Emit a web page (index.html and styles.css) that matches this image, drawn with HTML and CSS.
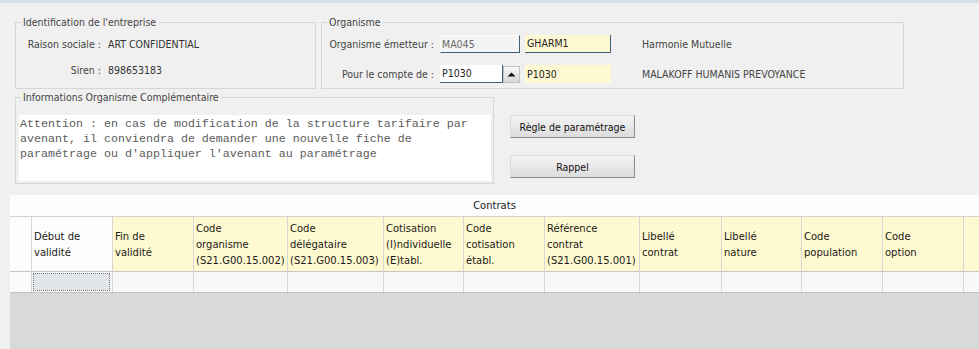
FILE: index.html
```html
<!DOCTYPE html>
<html lang="fr">
<head>
<meta charset="utf-8">
<title>Contrats</title>
<link rel="stylesheet" href="styles.css">
</head>
<body>
<div class="topbar"></div>
<div class="form">
  <div class="row1">
    <fieldset class="grp ident">
      <legend>Identification de l'entreprise</legend>
      <div class="kv">
        <span class="lbl">Raison sociale :</span><span class="val">ART CONFIDENTIAL</span>
        <span class="lbl">Siren :</span><span class="val">898653183</span>
      </div>
    </fieldset>
    <fieldset class="grp org">
      <legend>Organisme</legend>
      <div class="kv">
        <span class="lbl">Organisme émetteur :</span>
        <span class="fld ro">MA045</span>
        <span class="fld yel bord">GHARM1</span>
        <span class="name">Harmonie Mutuelle</span>
        <span class="lbl">Pour le compte de :</span>
        <span class="combo"><span class="fld wh">P1030</span><span class="spin"><svg width="9" height="5" viewBox="0 0 9 5"><polygon points="0.5,4.5 4.5,0.5 8.5,4.5" fill="#111"/></svg></span></span>
        <span class="fld yel">P1030</span>
        <span class="name">MALAKOFF HUMANIS PREVOYANCE</span>
      </div>
    </fieldset>
  </div>
  <div class="row2">
    <fieldset class="grp info">
      <legend>Informations Organisme Complémentaire</legend>
      <div class="note">Attention : en cas de modification de la structure tarifaire par avenant, il conviendra de demander une nouvelle fiche de paramétrage ou d'appliquer l'avenant au paramétrage</div>
    </fieldset>
    <div class="actions">
      <button class="btn">Règle de paramétrage</button>
      <button class="btn">Rappel</button>
    </div>
  </div>
</div>
<section class="contrats">
  <div class="ctitle">Contrats</div>
  <div class="cgrid">
    <div class="h white"></div>
    <div class="h white">Début de<br>validité</div>
    <div class="h">Fin de<br>validité</div>
    <div class="h">Code<br>organisme<br>(S21.G00.15.002)</div>
    <div class="h">Code<br>délégataire<br>(S21.G00.15.003)</div>
    <div class="h">Cotisation<br>(I)ndividuelle<br>(E)tabl.</div>
    <div class="h">Code<br>cotisation<br>établ.</div>
    <div class="h">Référence<br>contrat<br>(S21.G00.15.001)</div>
    <div class="h">Libellé<br>contrat</div>
    <div class="h">Libellé<br>nature</div>
    <div class="h">Code<br>population</div>
    <div class="h">Code<br>option</div>
    <div class="h last"></div>

    <div class="d rh"></div>
    <div class="d focus"><span class="focusbox"></span></div>
    <div class="d"></div>
    <div class="d"></div>
    <div class="d"></div>
    <div class="d"></div>
    <div class="d"></div>
    <div class="d"></div>
    <div class="d"></div>
    <div class="d"></div>
    <div class="d"></div>
    <div class="d"></div>
    <div class="d last"></div>
  </div>
  <div class="empty"></div>
</section>
</body>
</html>
```

FILE: styles.css
```css
* { box-sizing: border-box; }
html, body { margin: 0; height: 100%; overflow: hidden; }
body {
  background: #f0f0f0;
  font-family: "DejaVu Sans Condensed", "DejaVu Sans", sans-serif;
  font-stretch: condensed;
  font-size: 10.5px;
  color: #444;
}
.topbar { height: 3px; background: #d7e0e7; }
.form { padding: 13px 0 0 15px; }

.row1 { display: flex; gap: 5px; height: 73px; }
.grp { margin: 0; padding: 0; border: 1px solid #d6d6d6; min-width: 0; }
.grp legend { margin-left: 5px; padding: 0 2px; line-height: 12px; color: #444; }
.ident { width: 301px; }
.org { width: 583px; }

.ident .kv {
  display: grid;
  grid-template-columns: 85px 1fr;
  grid-template-rows: 28px 24px;
  column-gap: 7px;
  padding-top: 2px;
  align-items: center;
}
.lbl { text-align: right; white-space: nowrap; color: #444; }
.val { color: #333; white-space: nowrap; }

.org .kv {
  display: grid;
  grid-template-columns: 118px 80px 91px 1fr;
  grid-template-rows: 28px 28px;
  row-gap: 2px;
  padding-top: 2px;
  align-items: center;
}
.org .lbl { padding-right: 6px; }
.name { padding-left: 31px; color: #444; white-space: nowrap; }

.fld { display: block; height: 18px; line-height: 16px; padding-left: 2px; color: #222; white-space: nowrap; }
.fld.ro { background: #f4f4f4; border: 1px solid; border-color: #fcfcfc #3e6072 #3e6072 #fcfcfc; padding-left: 1px; color: #6a6a6a; }
.fld.yel { margin-left: 5px; width: 86px; background: #fff9d3; line-height: 18px; }
.fld.yel.bord { border-right: 1px solid #3e6072; border-bottom: 1px solid #3e6072; line-height: 17px; }
.combo { display: flex; align-items: flex-start; height: 18px; }
.fld.wh { width: 63px; background: #fff; border-right: 1px solid #3e6072; border-bottom: 1px solid #3e6072; line-height: 17px; }
.spin {
  width: 17px; height: 17px; margin-top: 1px;
  display: flex; align-items: center; justify-content: center;
  background: linear-gradient(#f7f7f7, #d9d9d9);
  border: 1px solid #c2c2c2;
}

.row2 { display: flex; margin-top: 2px; }
.info { width: 479px; height: 93px; }
.note {
  margin: 12px 2px 0 3px;
  height: 66px;
  background: #fff;
  padding: 2px 0 0 1px;
  font-family: "Liberation Mono", monospace;
  font-stretch: normal;
  font-size: 11.67px;
  line-height: 15px;
  color: #5c5c5c;
}
.actions { display: flex; flex-direction: column; gap: 17px; margin-left: 16px; padding-top: 24px; }
.btn {
  width: 125px; height: 23px; padding: 0;
  font: inherit; color: #111;
  background: linear-gradient(#f4f4f4, #dcdcdc);
  border: 1px solid; border-color: #dadada #8c8c8c #8c8c8c #dadada;
}

.contrats {
  margin: 11px 0 0 10px;
  background: #fdfdfd;
  font-family: "DejaVu Sans", sans-serif;
  font-stretch: normal;
  font-size: 10px;
  color: #1a1a1a;
}
.ctitle { height: 22px; line-height: 21px; text-align: center; border-bottom: 1px solid #d2d2d2; }
.cgrid {
  display: grid;
  grid-template-columns: 22px 81px 81px 94px 96px 80px 81px 95px 82px 80px 81px 81px 1fr;
}
.h {
  height: 55px;
  background: #fff9cf;
  border-right: 1px solid #d6d6d6;
  border-bottom: 1px solid #c6c6c6;
  display: flex; align-items: center;
  padding: 2px 0 0 2px;
  line-height: 16px;
  white-space: nowrap;
  overflow: hidden;
}
.h.white { background: #fdfdfd; }
.h.last, .d.last { border-right: 0; }
.d {
  height: 21px;
  background: #f8f8f8;
  border-right: 1px solid #d6d6d6;
  border-bottom: 1px solid #c2c2c2;
}
.d.rh { background: #fbfbfb; }
.d.focus { padding: 1px 2px 1px 1px; }
.focusbox { display: block; height: 100%; background: #e2e6ea; border: 1px dotted #7a7a7a; }
.empty { height: 56px; background: #d9d9d9; }
```
